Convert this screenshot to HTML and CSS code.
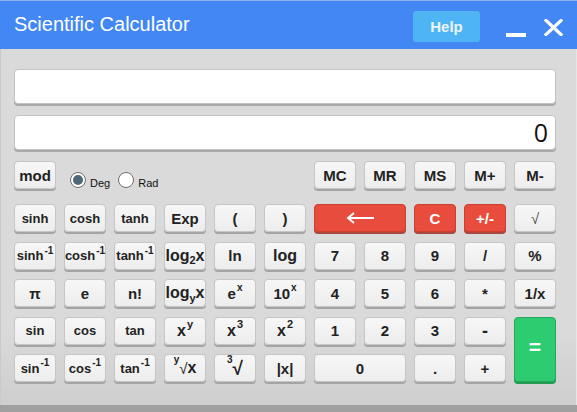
FILE: index.html
```html
<!DOCTYPE html>
<html lang="en">
<head>
<meta charset="utf-8">
<title>Scientific Calculator</title>
<link rel="stylesheet" href="styles.css">
</head>
<body>
<div class="window">
  <header class="titlebar">
    <h1 class="title">Scientific Calculator</h1>
    <button class="help">Help</button>
    <span class="minimize"></span>
    <svg class="close" width="19" height="17" viewBox="0 0 19 17"><path d="M2 1.5 L17 15.5 M17 1.5 L2 15.5" stroke="#fff" stroke-width="3.2" stroke-linecap="square" fill="none"/></svg>
  </header>
  <main class="panel">
    <div class="display expr"></div>
    <div class="display result">0</div>
    <div class="toprow">
      <button class="key big">mod</button>
      <div class="modes">
        <label class="mode"><span class="radio on"></span><span class="mode-text">Deg</span></label>
        <label class="mode"><span class="radio"></span><span class="mode-text">Rad</span></label>
      </div>
      <button class="key mem">MC</button>
      <button class="key">MR</button>
      <button class="key">MS</button>
      <button class="key">M+</button>
      <button class="key">M-</button>
    </div>
    <div class="keypad">
      <button class="key sm">sinh</button>
      <button class="key sm">cosh</button>
      <button class="key sm">tanh</button>
      <button class="key">Exp</button>
      <button class="key">(</button>
      <button class="key">)</button>
      <button class="key red wide"><svg width="30" height="12" viewBox="0 0 30 12"><path d="M3 6 H29 M9 1 L3 6 L9 11" stroke="#fff" stroke-width="2" fill="none"/></svg></button>
      <button class="key red">C</button>
      <button class="key red">+/-</button>
      <button class="key thin">√</button>

      <button class="key sm">sinh<sup>-1</sup></button>
      <button class="key sm">cosh<sup>-1</sup></button>
      <button class="key sm">tanh<sup>-1</sup></button>
      <button class="key lg">log<sub>2</sub>x</button>
      <button class="key">ln</button>
      <button class="key lg">log</button>
      <button class="key">7</button>
      <button class="key">8</button>
      <button class="key">9</button>
      <button class="key">/</button>
      <button class="key">%</button>

      <button class="key">π</button>
      <button class="key">e</button>
      <button class="key">n!</button>
      <button class="key lg">log<sub>y</sub>x</button>
      <button class="key">e<sup>x</sup></button>
      <button class="key">10<sup>x</sup></button>
      <button class="key">4</button>
      <button class="key">5</button>
      <button class="key">6</button>
      <button class="key">*</button>
      <button class="key">1/x</button>

      <button class="key sm">sin</button>
      <button class="key sm">cos</button>
      <button class="key sm">tan</button>
      <button class="key lg">x<sup>y</sup></button>
      <button class="key lg">x<sup>3</sup></button>
      <button class="key lg">x<sup>2</sup></button>
      <button class="key">1</button>
      <button class="key">2</button>
      <button class="key">3</button>
      <button class="key minus">-</button>
      <button class="key green">=</button>

      <button class="key sm">sin<sup>-1</sup></button>
      <button class="key sm">cos<sup>-1</sup></button>
      <button class="key sm">tan<sup>-1</sup></button>
      <button class="key lg"><sup class="idx">y</sup><span class="rad">√</span>x</button>
      <button class="key lg"><sup class="idx">3</sup><span class="rad cube">√</span></button>
      <button class="key">|x|</button>
      <button class="key wide">0</button>
      <button class="key">.</button>
      <button class="key">+</button>
    </div>
  </main>
  <footer class="bottombar"></footer>
</div>
</body>
</html>
```

FILE: styles.css
```css
* { box-sizing: border-box; }
html, body { margin: 0; padding: 0; }
body { font-family: "Liberation Sans", Arial, sans-serif; background: #d9d9d9; }

.window {
  width: 577px;
  height: 412px;
  display: flex;
  flex-direction: column;
  background: linear-gradient(#dadada 0, #dadada 330px, #cfcfcf 398px);
  overflow: hidden;
}

.titlebar {
  height: 49px;
  flex: none;
  background: #4287f4;
  border-top: 1px solid #8fb2ee;
  display: flex;
  align-items: center;
  padding: 0 14px 0 14px;
}
.title {
  margin: 0;
  font: 400 20px "Liberation Sans", Arial, sans-serif;
  color: #fff;
  flex: 1;
  padding-bottom: 2px;
}
.help {
  width: 67px;
  height: 31px;
  margin-top: 2px;
  border: none;
  border-radius: 3px;
  background: #4fb4f4;
  color: #eaf5fe;
  font: bold 15px "Liberation Sans", Arial, sans-serif;
  padding: 0;
}
.minimize {
  width: 20px;
  height: 4px;
  background: #fff;
  margin: 20px 0 0 26px;
}
.close { margin: 5px 0 0 18px; }

.panel {
  flex: 1;
  padding: 20px 21px 0 13px;
  border-left: 1px solid #cacaca;
  border-right: 1px solid #e6e6e6;
}

.display {
  width: 542px;
  height: 35px;
  background: #fff;
  border: 1px solid #c3c3c3;
  border-radius: 4px;
  box-shadow: 0 2px 0 #a9a9a9;
}
.expr { margin-bottom: 11px; }
.result {
  margin-bottom: 11px;
  text-align: right;
  padding-right: 7px;
  font: 400 25px "Open Sans", "DejaVu Sans", sans-serif;
  line-height: 33px;
  color: #111;
}

.toprow, .keypad {
  display: grid;
  grid-template-columns: repeat(11, 42px);
  column-gap: 8px;
  grid-auto-rows: 28px;
}
.toprow { margin-bottom: 15px; }
.keypad { row-gap: 9.5px; }

.modes {
  grid-column: 2 / 7;
  display: flex;
  align-items: flex-end;
  padding: 0 0 0 6px;
  gap: 8px;
}
.mode {
  display: flex;
  align-items: flex-end;
  gap: 4px;
  font: 400 11px "Liberation Sans", Arial, sans-serif;
  color: #111;
  padding-bottom: 0;
}
.mode-text { line-height: 12px; }
.radio {
  width: 16px;
  height: 16px;
  border: 1px solid #6f6f6f;
  border-radius: 50%;
  background: #fff;
  position: relative;
  margin-bottom: 1px;
}
.radio.on::after {
  content: "";
  position: absolute;
  left: 2px;
  top: 2px;
  width: 10px;
  height: 10px;
  border-radius: 50%;
  background: #4f6878;
}
.mem { grid-column: 7; }

.key {
  height: 28px;
  padding: 0;
  margin: 0;
  font: bold 15px "Liberation Sans", Arial, sans-serif;
  color: #222;
  background: linear-gradient(#f7f7f7, #ededed);
  border: 1px solid #c6c6c6;
  border-radius: 4px;
  box-shadow: 0 2px 0 #a4a4a4;
  display: flex;
  align-items: center;
  justify-content: center;
  line-height: 1;
}
.key.sm { font-size: 13px; }
.key.lg { font-size: 16px; }
.key.big { font-size: 15px; }
.key.thin { font-weight: 400; color: #555; }
.key.minus { font-size: 18px; }
.key sup { font-size: 10px; position: relative; top: -5px; vertical-align: baseline; margin-left: 1px; }
.key.lg sup { font-size: 11px; top: -6px; }
.key sub { font-size: 11px; position: relative; top: 5px; vertical-align: baseline; }
.key.wide { grid-column: span 2; }

.key.red {
  background: #e84c3d;
  border-color: #cf3f31;
  color: #fff;
  box-shadow: 0 2px 0 #a8473d;
}
.key.green {
  grid-row: span 2;
  height: auto;
  background: #2ecc71;
  border-color: #27a85d;
  color: #fff;
  font-size: 21px;
  box-shadow: 0 2px 0 #249a55;
  padding-bottom: 6px;
}

.key.lg sup.idx { font-size: 10px; top: -8px; margin: 0; }
.rad { font-weight: 400; font-size: 15px; }
.rad.cube { font-weight: bold; font-size: 19px; }

.bottombar {
  height: 7px;
  flex: none;
  background: #a0a0a0;
}
```
